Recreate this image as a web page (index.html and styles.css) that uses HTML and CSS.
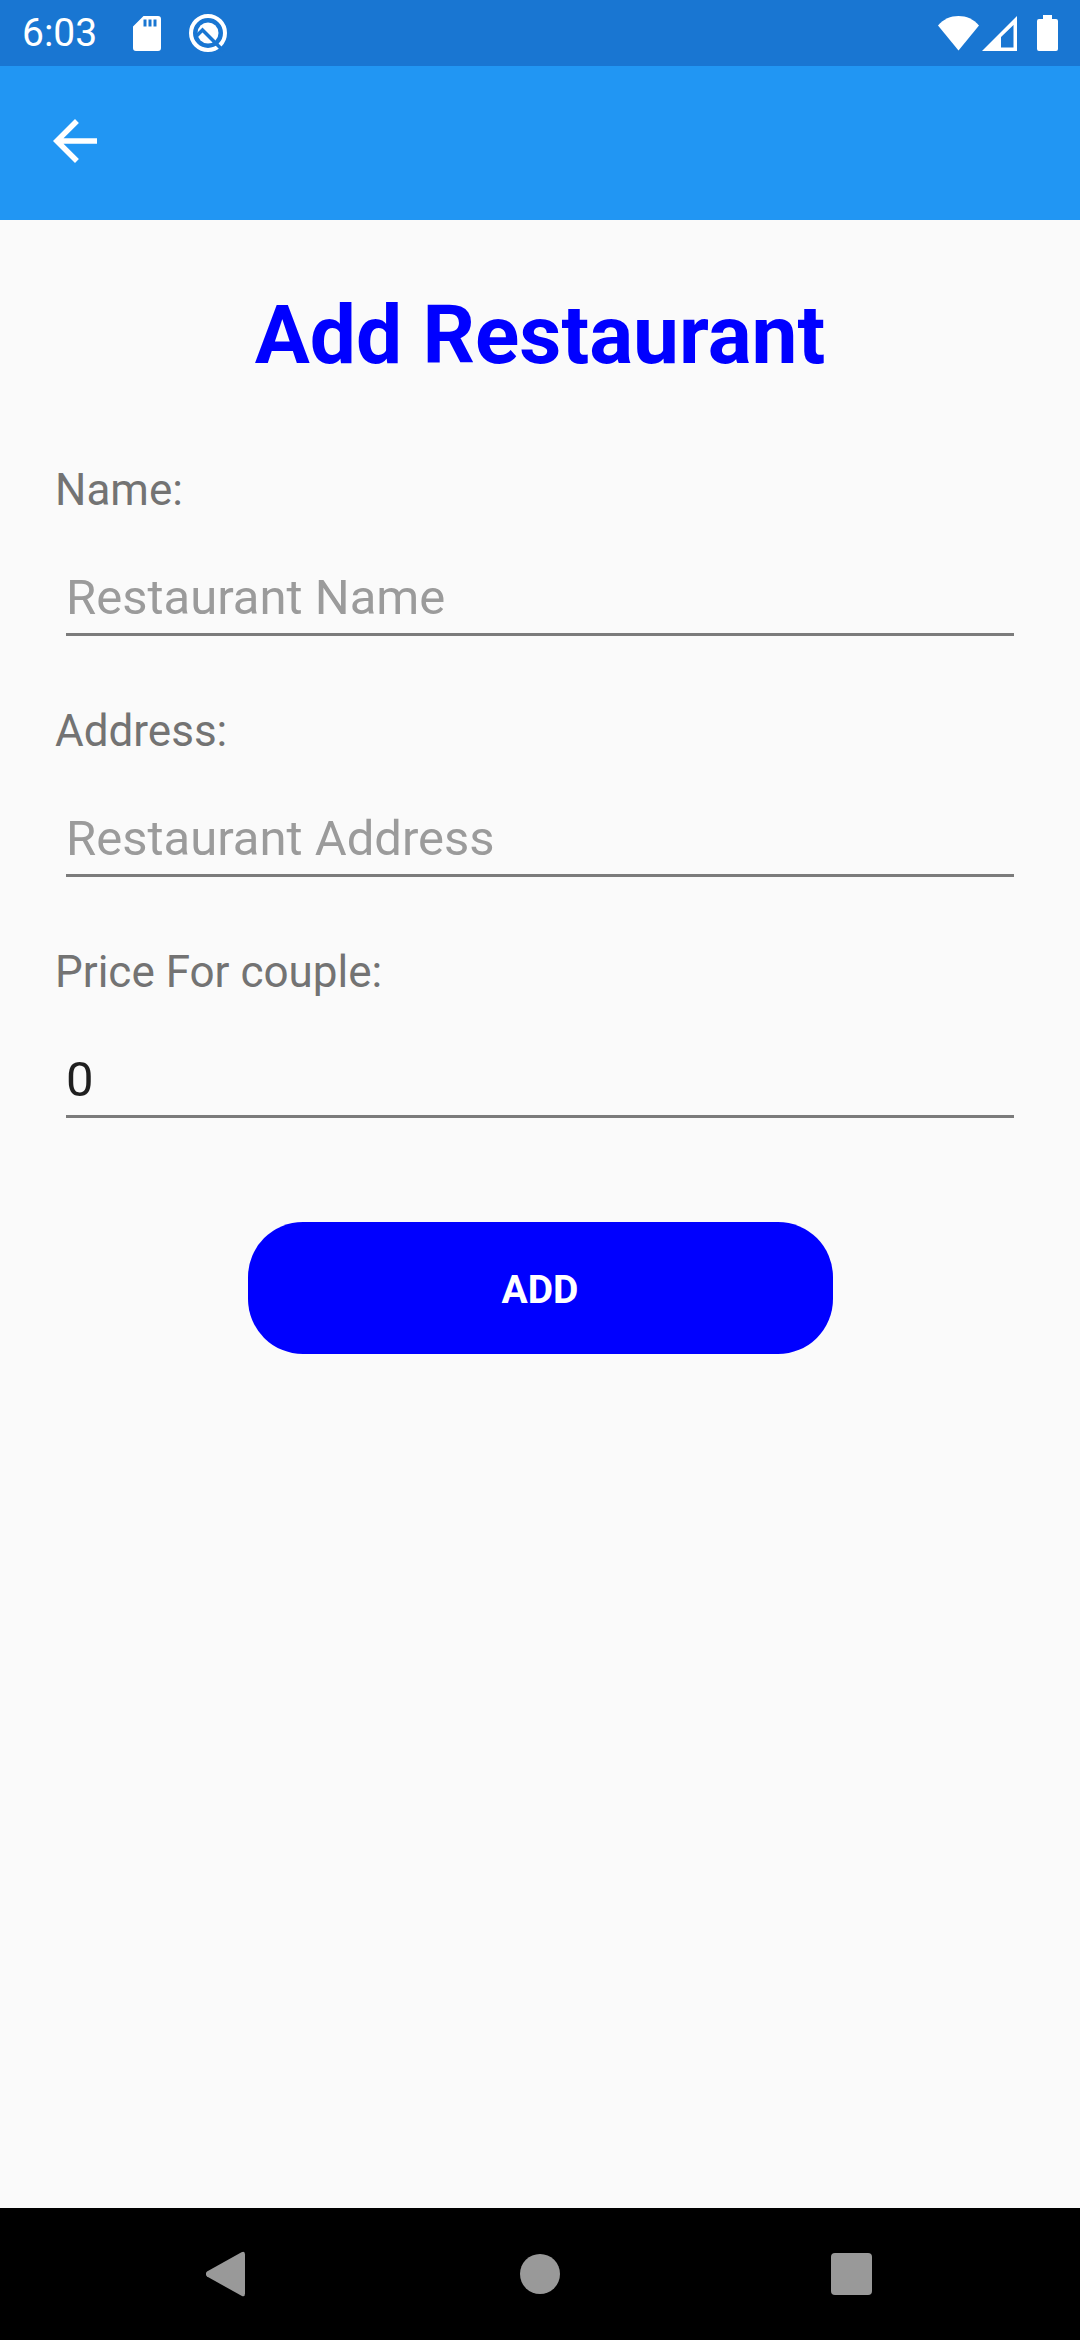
FILE: index.html
```html
<!DOCTYPE html>
<html lang="en">
<head>
  <meta charset="utf-8">
  <meta name="viewport" content="width=device-width, initial-scale=1">
  <title>Add Restaurant</title>
  <link rel="stylesheet" href="styles.css">
</head>
<body>
  <div class="screen">
    <div class="status-bar">
      <div class="status-group">
        <span class="time">6:03</span>
        <svg class="icon-sd" width="28" height="35" viewBox="0 0 28 35" aria-hidden="true">
          <path fill="#fff" fill-rule="evenodd" d="M10.500 0H25a3 3 0 0 1 3 3v29a3 3 0 0 1-3 3H3a3 3 0 0 1-3-3V10.500zM10.500 3.500v7h3v-7zM15.500 3.500v7h3v-7zM20.500 3.500v7h3v-7z"/>
        </svg>
        <svg class="icon-q" width="38" height="38" viewBox="0 0 38 38" aria-hidden="true">
          <circle cx="19" cy="19" r="17" fill="none" stroke="#fff" stroke-width="4"/>
          <circle cx="19" cy="19" r="10.500" fill="#fff"/>
          <path fill="none" stroke="#1976d2" stroke-width="3.500" d="M6.500 23L13.500 16L34 36.500"/>
        </svg>
      </div>
      <div class="status-group">
        <svg width="41" height="35" viewBox="0 0 41 35" aria-hidden="true">
          <path fill="#fff" d="M0 9.500C5.500 3 12.500 0 20.500 0S35.500 3 41 9.500L20.500 34.500z"/>
        </svg>
        <svg class="icon-signal" width="35" height="35" viewBox="0 0 35 35" aria-hidden="true">
          <path fill="#fff" fill-rule="evenodd" d="M35 0V35H0zM31.500 9L19 21V31.500H31.500z"/>
        </svg>
        <svg class="icon-battery" width="21" height="36" viewBox="0 0 21 36" aria-hidden="true">
          <path fill="#fff" d="M6 0h9v4h4a2 2 0 0 1 2 2v28a2 2 0 0 1-2 2H2a2 2 0 0 1-2-2V6a2 2 0 0 1 2-2h4z"/>
        </svg>
      </div>
    </div>

    <header class="app-bar">
      <button class="back" type="button" aria-label="Back">
        <svg width="66" height="66" viewBox="0 0 24 24" aria-hidden="true">
          <path fill="#fff" d="M20 11H7.830l5.590-5.590L12 4l-8 8 8 8 1.410-1.410L7.830 13H20z"/>
        </svg>
      </button>
    </header>

    <main class="content">
      <h1 class="title">Add Restaurant</h1>
      <form class="form">
        <div class="field">
          <label class="label" for="name">Name:</label>
          <input class="input" id="name" type="text" placeholder="Restaurant Name">
        </div>
        <div class="field">
          <label class="label" for="address">Address:</label>
          <input class="input" id="address" type="text" placeholder="Restaurant Address">
        </div>
        <div class="field">
          <label class="label" for="price">Price For couple:</label>
          <input class="input" id="price" type="text" inputmode="decimal" value="0">
        </div>
        <button class="submit" type="button">ADD</button>
      </form>
    </main>

    <nav class="nav-bar" aria-label="System">
      <button class="nav-button" type="button" aria-label="Back">
        <svg width="44" height="46" viewBox="0 0 44 46" aria-hidden="true">
          <path fill="#999" d="M1 20.500L35.500 1.200Q39 -.500 39 3.500V42.500Q39 46.500 35.500 44.800L1 25.500Q-1.500 23 1 20.500z"/>
        </svg>
      </button>
      <button class="nav-button" type="button" aria-label="Home">
        <svg width="42" height="42" viewBox="0 0 42 42" aria-hidden="true">
          <circle cx="21" cy="21" r="20" fill="#999"/>
        </svg>
      </button>
      <button class="nav-button" type="button" aria-label="Recent apps">
        <svg width="42" height="42" viewBox="0 0 42 42" aria-hidden="true">
          <rect width="41" height="42" rx="4" fill="#999"/>
        </svg>
      </button>
    </nav>
  </div>
</body>
</html>
```

FILE: styles.css
```css
* {
  box-sizing: border-box;
}

body {
  margin: 0;
  background: #fafafa;
  font-family: Roboto, sans-serif;
}

button,
input {
  margin: 0;
  padding: 0;
  border: 0;
  background: none;
  font-family: inherit;
}

svg {
  display: block;
}

.screen {
  display: flex;
  flex-direction: column;
  min-height: 100vh;
}

/* Status bar */
.status-bar {
  display: flex;
  justify-content: space-between;
  align-items: center;
  height: 66px;
  padding: 0 22px;
  background: #1976d2;
}

.status-group {
  display: flex;
  align-items: center;
}

.time {
  color: #fff;
  font-size: 39px;
  line-height: 46px;
}

.icon-sd {
  margin-left: 36px;
}

.icon-q {
  margin-left: 28px;
}

.icon-signal {
  margin-left: 3px;
}

.icon-battery {
  margin-left: 20px;
}

/* App bar */
.app-bar {
  height: 154px;
  padding: 42px;
  background: #2196f3;
}

.back {
  display: block;
}

/* Form */
.content {
  flex: 1;
  padding: 66px 55px;
}

.title {
  margin: 0 0 80px;
  color: #00f;
  font-size: 82px;
  font-weight: 700;
  line-height: 98px;
  text-align: center;
}

.form {
  display: flex;
  flex-direction: column;
  gap: 69px;
}

.field {
  display: flex;
  flex-direction: column;
  gap: 51px;
}

.label {
  color: #737373;
  font-size: 44px;
  line-height: 52px;
}

.input {
  height: 69px;
  margin: 0 11px;
  padding-bottom: 6px;
  border-bottom: 3px solid #7b7b7b;
  border-radius: 0;
  color: #1f1f1f;
  font-size: 49px;
  line-height: 60px;
  outline: none;
}

.input::placeholder {
  color: #9b9b9b;
  opacity: 1;
}

.submit {
  align-self: center;
  width: 585px;
  max-width: 100%;
  height: 132px;
  margin-top: 35px;
  padding-top: 4px;
  border-radius: 55px;
  background: #00f;
  color: #fff;
  font-size: 39px;
  font-weight: 700;
}

/* Navigation bar */
.nav-bar {
  display: grid;
  grid-template-columns: repeat(3, 1fr);
  height: 132px;
  padding: 0 72px;
  background: #000;
}

.nav-button {
  display: grid;
  place-items: center;
}
```
